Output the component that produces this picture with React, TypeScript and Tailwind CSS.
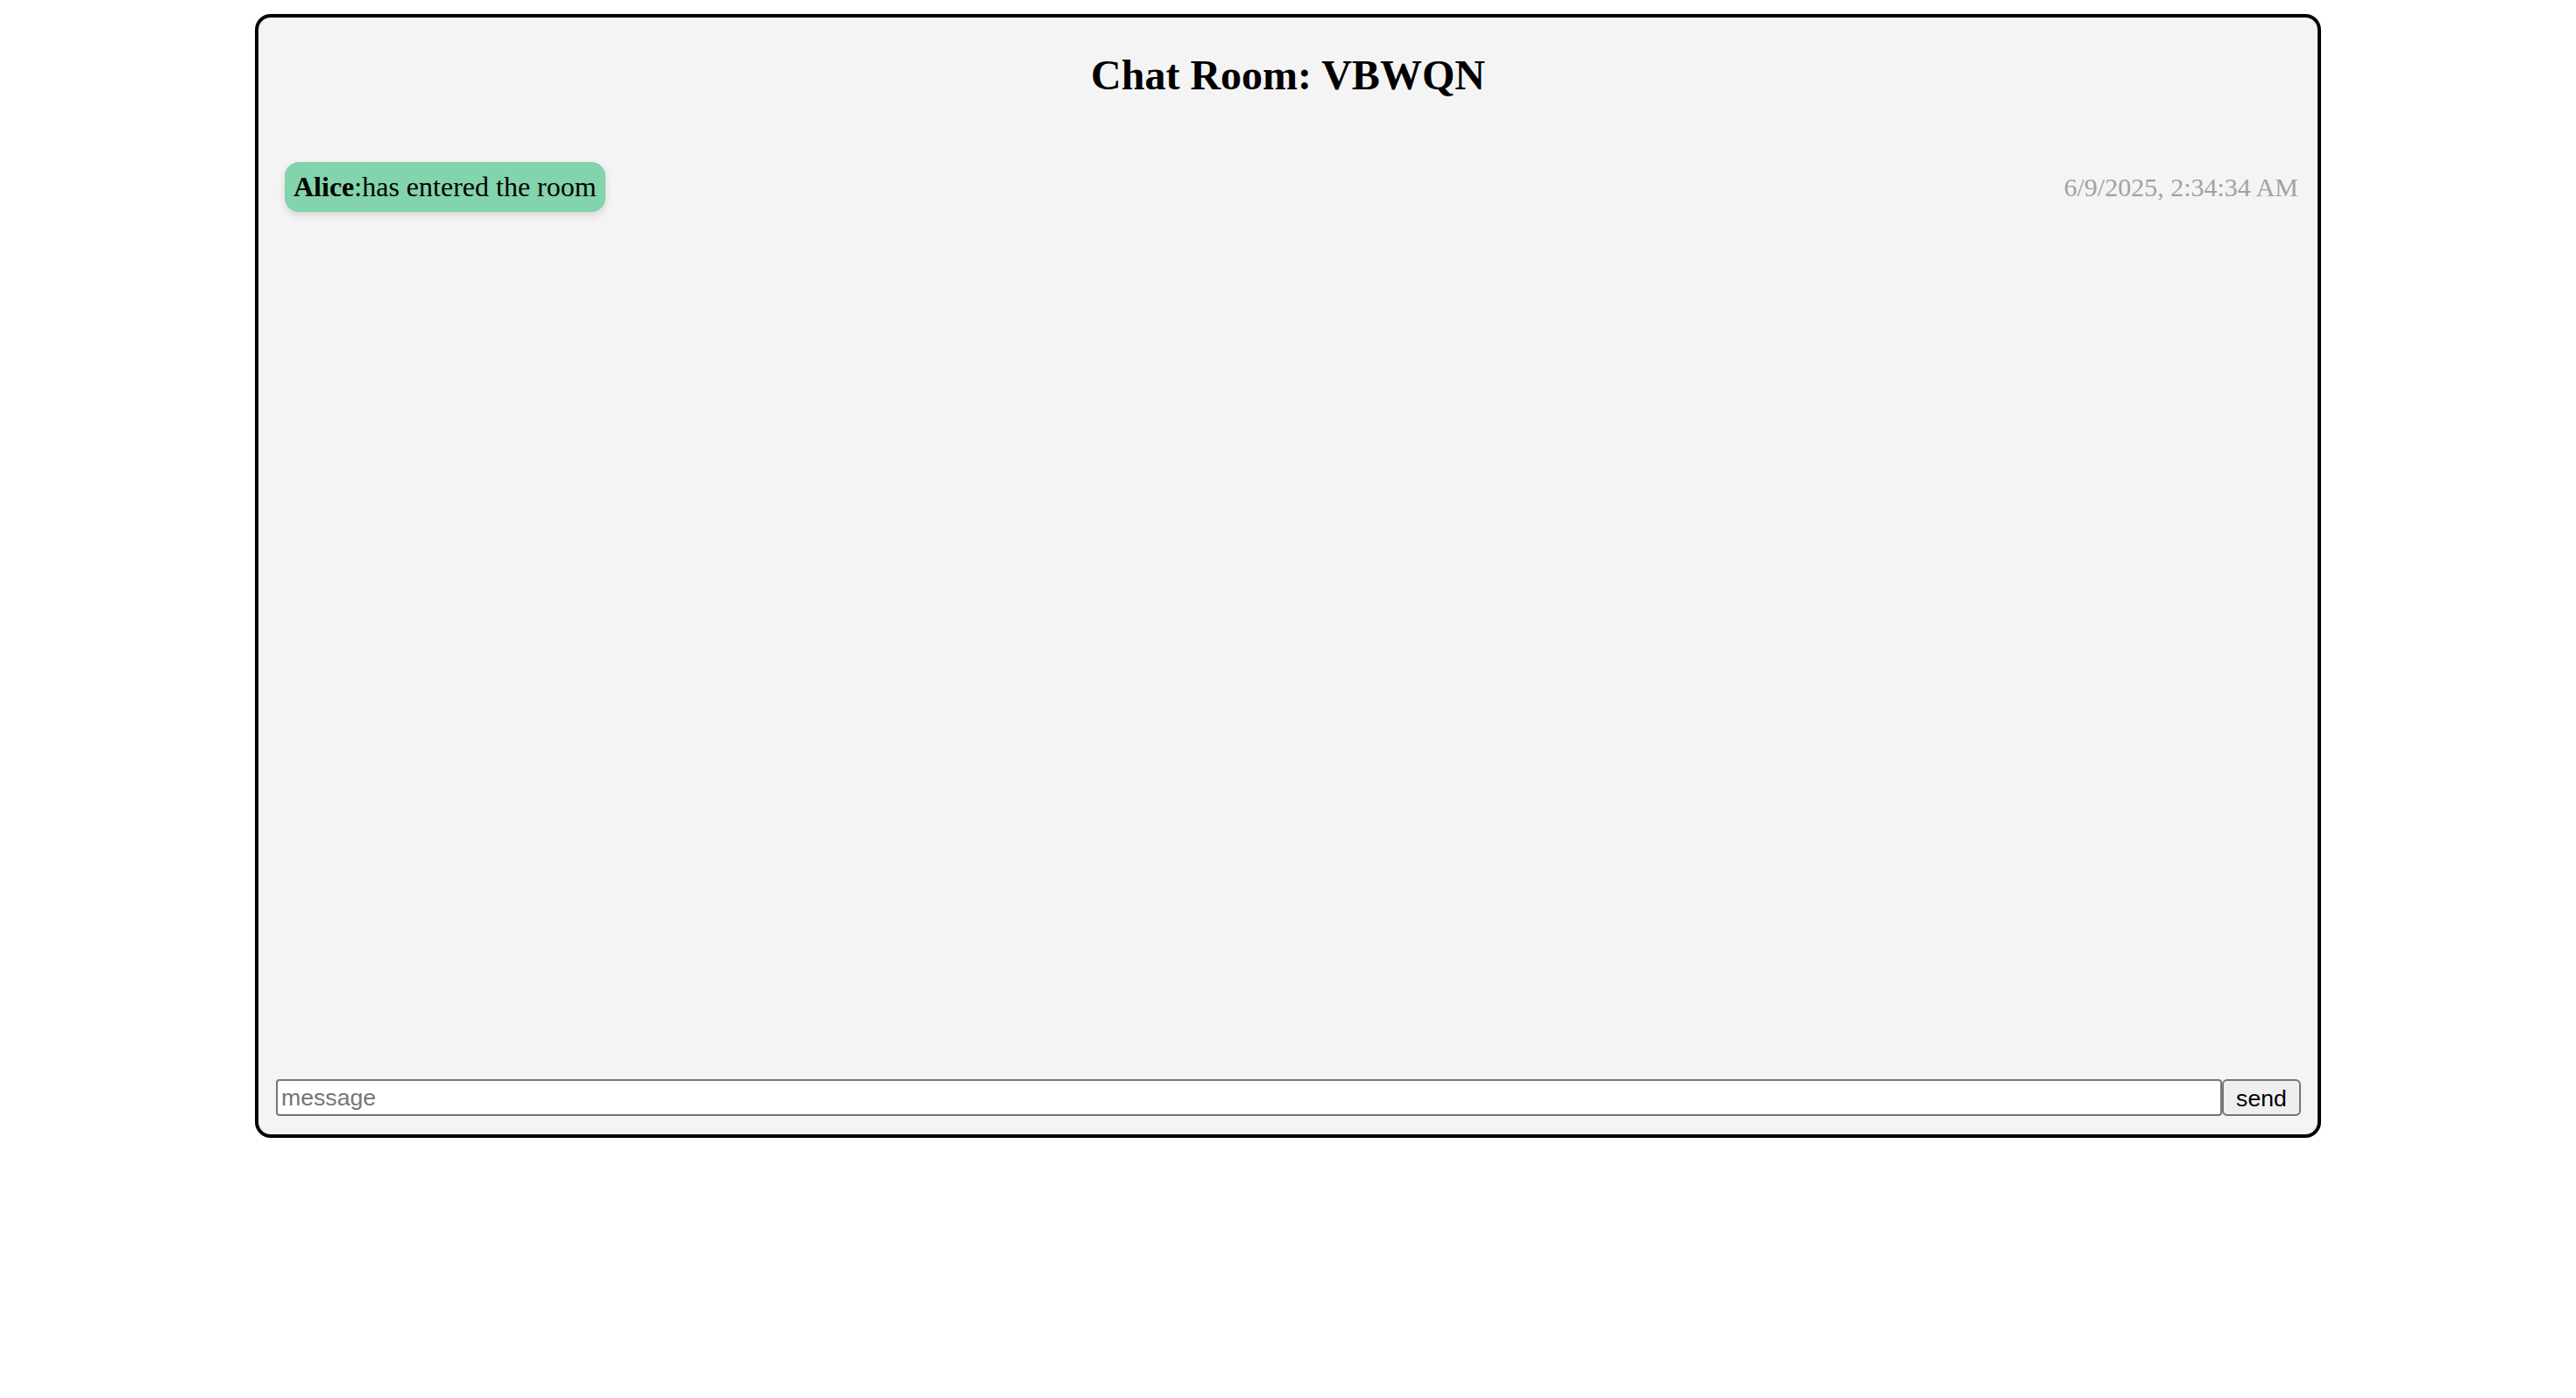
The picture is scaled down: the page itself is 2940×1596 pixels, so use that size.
const App = () => {
  return (
    <div className="min-h-screen w-full bg-white pt-4">
      <div className="mx-auto box-border flex h-[1283px] w-[2358px] flex-col rounded-[18px] border-4 border-black bg-[#f4f4f4] p-3">
        <h2 className="mt-[26px] mb-0 text-center font-['Liberation_Serif',serif] text-[48px] leading-[55px] font-bold text-black">
          Chat Room: VBWQN
        </h2>

        <div className="flex-1 overflow-hidden pt-[72px] pr-[10px] pl-[18px]">
          <div className="flex items-center justify-between">
            <div className="rounded-[16px] bg-[#83d3ad] p-[10px] font-['Liberation_Serif',serif] text-[32px] leading-[37px] text-black shadow-[0_4px_10px_rgba(0,0,0,0.12)]">
              <b>Alice</b>:has entered the room
            </div>
            <span className="font-['Liberation_Serif',serif] text-[30px] leading-[37px] text-[#a2a2a2]">
              6/9/2025, 2:34:34 AM
            </span>
          </div>
        </div>

        <form className="flex pr-[7px] pb-[9px] pl-[8px]" onSubmit={(e) => e.preventDefault()}>
          <input
            type="text"
            placeholder="message"
            className="box-border h-[42px] flex-1 rounded-[4px] border-2 border-[#767676] bg-white px-[4px] font-['Liberation_Sans',Arial,sans-serif] text-[26.67px] text-black outline-none placeholder:text-[#757575]"
          />
          <button
            type="submit"
            className="box-border h-[42px] w-[90px] rounded-[6px] border-2 border-[#767676] bg-[#efefef] font-['Liberation_Sans',Arial,sans-serif] text-[26.67px] text-black"
          >
            send
          </button>
        </form>
      </div>
    </div>
  );
};
export default App;
